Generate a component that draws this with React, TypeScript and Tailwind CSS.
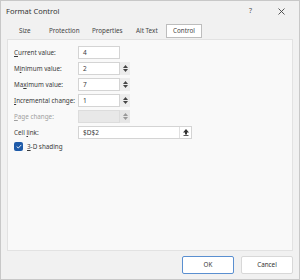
import React from 'react';

const font = { fontFamily: '"Noto Sans", "Open Sans", sans-serif' };

function Spin({ disabled = false }: { disabled?: boolean }) {
  return (
    <div className={`flex w-[10px] flex-col items-center justify-center gap-[1px] ${disabled ? 'bg-[#e6e6e6]' : 'bg-[#ececec]'}`}>
      <svg width="5" height="3" viewBox="0 0 5 3"><path d="M0 3 L2.5 0 L5 3 Z" fill={disabled ? '#999' : '#444'} /></svg>
      <svg width="5" height="3" viewBox="0 0 5 3"><path d="M0 0 L2.5 3 L5 0 Z" fill={disabled ? '#999' : '#444'} /></svg>
    </div>
  );
}

function Row({ label, value, spin = true, disabled = false, u }: { label: string; value: string; spin?: boolean; disabled?: boolean; u: number }) {
  return (
    <div className="flex h-[13px] items-center">
      <span className={`w-[64px] text-[6.3px] ${disabled ? 'text-[#a0a0a0]' : 'text-[#3a3a3a]'}`}>
        {label.slice(0, u)}
        <span className="underline">{label.slice(u, u + 1)}</span>
        {label.slice(u + 1)}
      </span>
      <div className="flex h-[13px]">
        <div className={`flex w-[42px] items-center border px-[4px] text-[6.5px] text-[#3a3a3a] ${disabled ? 'border-[#dcdcdc] bg-[#e8e8e8]' : 'border-[#d4d4d4] bg-white'}`}>{value}</div>
        {spin && <Spin disabled={disabled} />}
      </div>
    </div>
  );
}

export default function App() {
  return (
    <div style={font} className="flex h-[280px] w-[300px] flex-col border border-[#c8c8c8] bg-[#f1f1f1]">
      {/* Title bar */}
      <div className="flex h-[20px] items-center px-[5px] pt-[1px]">
        <span className="text-[7.5px] text-[#333]">Format Control</span>
        <span className="ml-auto mr-[26px] text-[7px] text-[#555]">?</span>
        <svg width="7" height="7" viewBox="0 0 7 7" className="mr-[9px]">
          <path d="M0.5 0.5 L6.5 6.5 M6.5 0.5 L0.5 6.5" stroke="#444" strokeWidth="0.9" />
        </svg>
      </div>

      {/* Tabs */}
      <div className="flex h-[18px] items-end pl-[12px] text-[6.3px] text-[#444]">
        <span className="mb-[4px] w-[30px] pl-[6px]">Size</span>
        <span className="mb-[4px] w-[43px] pl-[6px]">Protection</span>
        <span className="mb-[4px] w-[44px] pl-[6px]">Properties</span>
        <span className="mb-[4px] w-[36px] pl-[6px]">Alt Text</span>
        <span className="mb-[1px] flex h-[14px] w-[36px] items-center justify-center border border-[#bdbdbd] bg-white">Control</span>
      </div>

      {/* Panel */}
      <div className="mx-[6px] flex h-[212px] flex-col gap-[3px] border border-[#e2e2e2] bg-[#f9f9f9] pl-[6px] pt-[6px]">
        <Row label="Current value:" value="4" spin={false} u={0} />
        <Row label="Minimum value:" value="2" u={1} />
        <Row label="Maximum value:" value="7" u={2} />
        <Row label="Incremental change:" value="1" u={0} />
        <Row label="Page change:" value="" disabled u={0} />
        <div className="flex h-[13px] items-center">
          <span className="w-[64px] text-[6.3px] text-[#3a3a3a]">
            Cell <span className="underline">l</span>ink:
          </span>
          <div className="flex h-[13px] w-[114px] items-center border border-[#d4d4d4] bg-white">
            <span className="flex-1 px-[4px] text-[6.5px] text-[#3a3a3a]">$D$2</span>
            <div className="flex h-[11px] w-[12px] items-center justify-center border-l border-[#e0e0e0]">
              <svg width="6" height="7" viewBox="0 0 6 7">
                <path d="M3 0 L6 3.5 L4 3.5 L4 5.5 L2 5.5 L2 3.5 L0 3.5 Z" fill="#333" />
                <rect x="0.5" y="6.2" width="5" height="0.8" fill="#333" />
              </svg>
            </div>
          </div>
        </div>
        <div className="flex items-center gap-[4px]">
          <div className="flex h-[9px] w-[9px] items-center justify-center rounded-[2px] bg-[#1e5aa8]">
            <svg width="6" height="5" viewBox="0 0 6 5"><path d="M0.7 2.6 L2.3 4 L5.3 0.9" stroke="white" strokeWidth="0.9" fill="none" /></svg>
          </div>
          <span className="text-[6.3px] text-[#3a3a3a]">
            <span className="underline">3</span>-D shading
          </span>
        </div>
      </div>

      {/* Buttons */}
      <div className="mt-[5px] flex justify-end gap-[7px] pr-[6px]">
        <div className="flex h-[18px] w-[52px] items-center justify-center rounded-[2px] border border-[#5a8fd0] bg-white text-[6.3px] text-[#333]">OK</div>
        <div className="flex h-[18px] w-[52px] items-center justify-center rounded-[2px] border border-[#d8d8d8] bg-white text-[6.3px] text-[#333]">Cancel</div>
      </div>
    </div>
  );
}
